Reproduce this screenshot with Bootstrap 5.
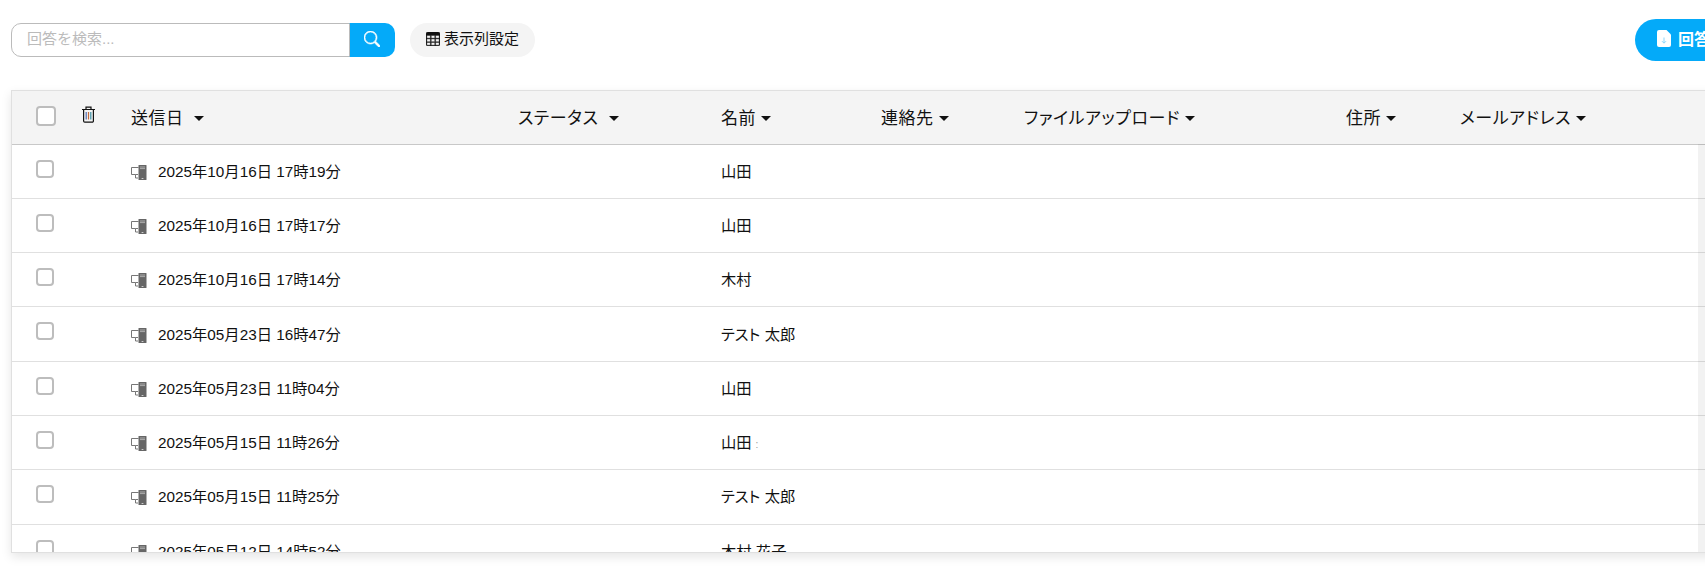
<!DOCTYPE html>
<html lang="ja">
<head>
  <meta charset="UTF-8" />
  <meta name="viewport" content="width=device-width, initial-scale=1.0"/>
  <title>回答一覧</title>
  <link rel="stylesheet" href="https://cdn.jsdelivr.net/npm/bootstrap@5.3.0/dist/css/bootstrap.min.css">
  <style>
    html { overflow: hidden; }
    body {
      background: #fff;
      color: #111;
      font-family: "Liberation Sans", "Noto Sans CJK JP", sans-serif;
      font-size: 15px;
      min-height: 100vh;
    }
    .page-wrap { width: 1870px; padding: 19px 20px 0 11px; }
    .toolbar { height: 42px; margin-bottom: 29px; }
    .search-box { width: 384px; height: 34px; }
    .search-box .form-control {
      border: 1px solid #bbb;
      border-radius: 10px 0 0 10px;
      font-size: 15px;
      padding: 0 15px 2px;
      box-shadow: none;
    }
    .search-box .form-control::placeholder { color: #bbb; }
    .search-btn {
      width: 46px;
      padding: 0 0 4px;
      background: #04aaf9;
      border: 0;
      border-radius: 0 10px 10px 0;
      color: #fff;
    }
    .search-btn svg { stroke: currentColor; stroke-width: .6; }
    .col-btn {
      height: 34px;
      width: 125px;
      margin-left: 15px;
      padding: 0 0 2px;
      background: #f4f4f4;
      border: 0;
      border-radius: 17px;
      color: #111;
      font-size: 15px;
    }
    .col-btn svg { stroke: currentColor; stroke-width: .4; }
    .dl-btn {
      height: 42px;
      width: 215px;
      padding: 0 0 0 22px;
      background: #04aaf9;
      border: 0;
      border-radius: 21px;
      color: #fff;
      font-size: 16px;
      font-weight: 700;
      white-space: nowrap;
      text-align: left;
    }
    .dl-btn svg { margin-right: 7px; vertical-align: -2px; }
    .answers-box {
      position: relative;
      height: 463px;
      overflow: hidden;
      border: 1px solid #e0e0e0;
      border-right: 0;
      box-shadow: 0 4px 10px rgba(0,0,0,.1);
    }
    .answers-table { table-layout: fixed; width: 1829px; margin: 0; }
    .answers-table th, .answers-table td {
      padding: 0;
      vertical-align: middle;
      color: #111;
    }
    .answers-table thead th {
      height: 53px;
      background: #f4f4f4;
      border-bottom: 1px solid #c8c8c8;
      padding-top: 2px;
      font-size: 17px;
      font-weight: 400;
      letter-spacing: .55px;
      font-feature-settings: "palt";
    }
    .answers-table tbody td {
      height: 54.3px;
      border-bottom: 1px solid #e0e0e0;
      padding-top: 2px;
      font-size: 15.3px;
      font-feature-settings: "palt";
    }
    .answers-table .dropdown-toggle::after {
      border-top-width: 5px;
      border-left-width: 5px;
      border-right-width: 5px;
      margin-left: 5px;
      vertical-align: 3px;
    }
    .answers-table .cell-check { padding-left: 24px; vertical-align: top; }
    .answers-table thead .cell-check { padding-top: 15px; }
    .answers-table tbody .cell-check { padding-top: 15px; }
    .answers-table thead .cell-trash { padding-left: 11px; vertical-align: top; padding-top: 15px; }
    .answers-table .form-check-input {
      display: block;
      width: 18px;
      height: 18px;
      margin: 0;
      border: 2px solid #bdbdbd;
      border-radius: 4px;
    }
    .answers-table thead .form-check-input { width: 20px; height: 20px; }
    .device-icon { margin-right: 11px; vertical-align: -3px; }
    .name-cell { padding-left: 1px !important; }
    .trail-mark { color: #999; font-size: 10px; margin-left: 4px; }
    .scroll-track {
      position: absolute;
      top: 53px;
      bottom: 0;
      left: 1686px;
      width: 20px;
      background: rgba(0,0,0,.05);
    }
  </style>
</head>
<body>

  <svg width="0" height="0" class="position-absolute">
    <symbol id="devices" viewBox="0 0 16 15">
      <path d="M.5 2.5h7M.5 2.5v7h4M7 9.5H4.5v3.5H7" fill="none" stroke="#777" stroke-width="1"/>
      <rect x="7.5" y="0" width="8" height="15" rx=".6" fill="#666"/>
      <path d="M9 2h5M9 3.6h5" stroke="#ccc" stroke-width=".7"/>
      <rect x="10.6" y="13" width="1.8" height="1" fill="#ccc"/>
    </symbol>
  </svg>

  <div class="page-wrap">
    <div class="toolbar d-flex justify-content-between">
      <div class="d-flex align-items-start pt-1">
        <div class="input-group search-box">
          <input type="text" class="form-control" placeholder="回答を検索...">
          <button class="search-btn" type="button">
            <svg width="16" height="16" viewBox="0 0 16 16" fill="currentColor"><path d="M11.742 10.344a6.5 6.5 0 1 0-1.397 1.398h-.001c.03.04.062.078.098.115l3.85 3.85a1 1 0 0 0 1.415-1.414l-3.85-3.85a1.007 1.007 0 0 0-.115-.1zM12 6.5a5.5 5.5 0 1 1-11 0 5.5 5.5 0 0 1 11 0z"/></svg>
          </button>
        </div>
        <button class="col-btn d-flex align-items-center justify-content-center gap-1" type="button">
          <svg width="14" height="14" viewBox="0 0 16 16" fill="currentColor"><path d="M0 2a2 2 0 0 1 2-2h12a2 2 0 0 1 2 2v12a2 2 0 0 1-2 2H2a2 2 0 0 1-2-2V2zm15 2h-4v3h4V4zm0 4h-4v3h4V8zm0 4h-4v3h3a1 1 0 0 0 1-1v-2zm-5 3v-3H6v3h4zm-5 0v-3H1v2a1 1 0 0 0 1 1h3zm-4-4h4V8H1v3zm0-4h4V4H1v3zm5-3v3h4V4H6zm4 4H6v3h4V8z"/></svg>
          表示列設定
        </button>
      </div>
      <button class="dl-btn" type="button">
        <svg width="14" height="17" viewBox="0 0 14 17"><path d="M2 0h7.5L14 4.5V15a2 2 0 0 1-2 2H2a2 2 0 0 1-2-2V2a2 2 0 0 1 2-2z" fill="#fff"/><path d="M7 7.5v5.5M5 11.2l2 2 2-2" fill="none" stroke="#8cd6fb" stroke-width="1"/></svg>回答ダウンロード
      </button>
    </div>

    <div class="answers-box">
      <table class="table answers-table">
        <colgroup>
          <col style="width:58px"><col style="width:61px"><col style="width:387px"><col style="width:202px"><col style="width:161px"><col style="width:143px"><col style="width:322px"><col style="width:114px"><col>
        </colgroup>
        <thead>
          <tr>
            <th class="cell-check"><input class="form-check-input" type="checkbox"></th>
            <th class="cell-trash">
              <svg class="d-block" width="15" height="17" viewBox="0 0 15 17">
                <path d="M1 3.5h13M5 3V1.2h5V3" fill="none" stroke="#111" stroke-width="1.2"/>
                <path d="M2.6 3.5v11.5a1.2 1.2 0 0 0 1.2 1.2h7.4a1.2 1.2 0 0 0 1.2-1.2V3.5" fill="none" stroke="#111" stroke-width="1.2"/>
                <path d="M5.2 6v7.5" stroke="#4d6bb3" stroke-width="1.2"/>
                <path d="M7.5 6v7.5" stroke="#c46a3c" stroke-width="1.2"/>
                <path d="M9.8 6v7.5" stroke="#3b8fa3" stroke-width="1.2"/>
              </svg>
            </th>
            <th><span class="dropdown-toggle">送信日&nbsp;</span></th>
            <th><span class="dropdown-toggle">ステータス&nbsp;</span></th>
            <th class="name-cell"><span class="dropdown-toggle">名前</span></th>
            <th><span class="dropdown-toggle">連絡先</span></th>
            <th><span class="dropdown-toggle">ファイルアップロード</span></th>
            <th><span class="dropdown-toggle">住所</span></th>
            <th><span class="dropdown-toggle">メールアドレス</span></th>
          </tr>
        </thead>
        <tbody>
          <tr><td class="cell-check"><input class="form-check-input" type="checkbox"></td><td></td><td><svg class="device-icon" width="16" height="15"><use href="#devices"/></svg>2025年10月16日 17時19分</td><td></td><td class="name-cell">山田</td><td></td><td></td><td></td><td></td></tr>
          <tr><td class="cell-check"><input class="form-check-input" type="checkbox"></td><td></td><td><svg class="device-icon" width="16" height="15"><use href="#devices"/></svg>2025年10月16日 17時17分</td><td></td><td class="name-cell">山田</td><td></td><td></td><td></td><td></td></tr>
          <tr><td class="cell-check"><input class="form-check-input" type="checkbox"></td><td></td><td><svg class="device-icon" width="16" height="15"><use href="#devices"/></svg>2025年10月16日 17時14分</td><td></td><td class="name-cell">木村</td><td></td><td></td><td></td><td></td></tr>
          <tr><td class="cell-check"><input class="form-check-input" type="checkbox"></td><td></td><td><svg class="device-icon" width="16" height="15"><use href="#devices"/></svg>2025年05月23日 16時47分</td><td></td><td class="name-cell">テスト 太郎</td><td></td><td></td><td></td><td></td></tr>
          <tr><td class="cell-check"><input class="form-check-input" type="checkbox"></td><td></td><td><svg class="device-icon" width="16" height="15"><use href="#devices"/></svg>2025年05月23日 11時04分</td><td></td><td class="name-cell">山田</td><td></td><td></td><td></td><td></td></tr>
          <tr><td class="cell-check"><input class="form-check-input" type="checkbox"></td><td></td><td><svg class="device-icon" width="16" height="15"><use href="#devices"/></svg>2025年05月15日 11時26分</td><td></td><td class="name-cell">山田<span class="trail-mark">:</span></td><td></td><td></td><td></td><td></td></tr>
          <tr><td class="cell-check"><input class="form-check-input" type="checkbox"></td><td></td><td><svg class="device-icon" width="16" height="15"><use href="#devices"/></svg>2025年05月15日 11時25分</td><td></td><td class="name-cell">テスト 太郎</td><td></td><td></td><td></td><td></td></tr>
          <tr><td class="cell-check"><input class="form-check-input" type="checkbox"></td><td></td><td><svg class="device-icon" width="16" height="15"><use href="#devices"/></svg>2025年05月12日 14時52分</td><td></td><td class="name-cell">木村 花子</td><td></td><td></td><td></td><td></td></tr>
        </tbody>
      </table>
      <div class="scroll-track"></div>
    </div>
  </div>

  <script src="https://cdn.jsdelivr.net/npm/bootstrap@5.3.0/dist/js/bootstrap.bundle.min.js"></script>
</body>
</html>
